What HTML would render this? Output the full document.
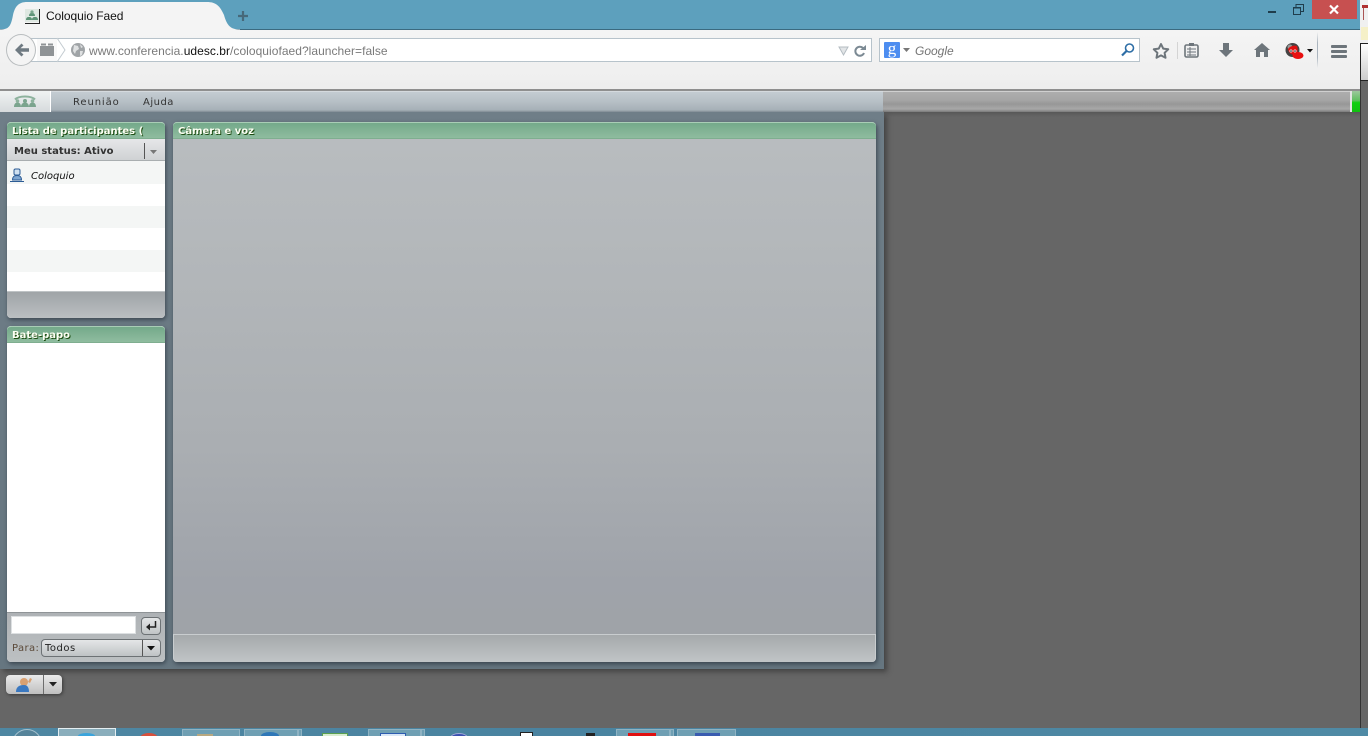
<!DOCTYPE html>
<html lang="pt">
<head>
<meta charset="utf-8">
<title>Coloquio Faed</title>
<style>
html,body{margin:0;padding:0;width:1368px;height:736px;overflow:hidden;background:#666}
#w{position:relative;width:1368px;height:736px;overflow:hidden;background:#666;font-family:"Liberation Sans",sans-serif}
.a{position:absolute}
.ph{position:absolute;height:17px;background:linear-gradient(#74a98a,#8fbc9f);border-top:1px solid #a9cdb6;border-bottom:1px solid #7fae90;border-radius:4px 4px 0 0;box-sizing:border-box;color:#fdfff4;font:bold 10px/15px "DejaVu Sans",sans-serif;padding:1px 0 0 5px;text-shadow:1px 1px 0 #1d4d12;white-space:nowrap;overflow:hidden}
.tb{position:absolute;top:729px;height:7px;box-sizing:border-box;background:#6f9fb3;border:1px solid #8fb3c3;border-bottom:0}
.tx{position:absolute;white-space:nowrap}
</style>
</head>
<body>
<div id="w">
<!-- right neighbouring window strip -->
<div class="a" style="left:1360px;top:0;width:8px;height:43px;background:#f0f0f0"></div>
<div class="a" style="left:1362px;top:5px;width:6px;height:3px;background:#b03030"></div>
<div class="a" style="left:1363px;top:8px;width:5px;height:12px;border-left:1px solid #a55;box-sizing:border-box"></div>
<div class="a" style="left:1361px;top:27px;width:7px;height:13px;background:#f5f0c8"></div>
<div class="a" style="left:1360px;top:43px;width:8px;height:38px;box-sizing:border-box;background:linear-gradient(#fff,#ccc);border:1px solid #222;border-right:0"></div>
<div class="a" style="left:1360px;top:81px;width:1px;height:648px;background:#333"></div>

<!-- title bar -->
<div class="a" style="left:0;top:0;width:1360px;height:30px;background:#5da0bd;border-bottom:1px solid #3b6a80;box-sizing:border-box"></div>
<!-- nav bar -->
<div class="a" style="left:0;top:30px;width:1360px;height:61px;background:linear-gradient(#f4f4f4,#eeeeee);border-bottom:2px solid #8f8f8f;box-sizing:border-box"></div>
<!-- tab -->
<svg class="a" style="left:0;top:0" width="240" height="31" viewBox="0 0 240 31">
<path d="M0 29.500C9 29.500 11 26 13 15C15 6 19 2 27 2H207C216 2 220 6 224 15C227 26 231 29.500 240 29.500V31H0Z" fill="#f4f4f4" stroke="none"/>
</svg>
<svg class="a" style="left:236px;top:9px" width="14" height="14" viewBox="0 0 14 14"><path d="M2 7h10M7 2v10" stroke="#47697a" stroke-width="2.200" fill="none"/></svg>
<svg class="a" style="left:24px;top:8px" width="16" height="16" viewBox="0 0 16 16"><rect x="1" y="1" width="14" height="13" fill="#dfe8e2"/><path d="M15.500 1v14.500H1" stroke="#222" fill="none"/><path d="M2 12c0-3 2-3 3-3s3 0 3 3zM8 12c0-3 2-3 3-3s3 0 3 3zM5 8c0-3 2-3 3-3s3 0 3 3z" fill="#5f9478"/><circle cx="8" cy="4" r="1.600" fill="#7aa68d"/></svg>
<div class="tx" style="left:46px;top:9px;font-size:12px;line-height:15px;color:#111;letter-spacing:-.05px">Coloquio Faed</div>

<!-- window controls -->
<div class="a" style="left:1268px;top:11px;width:8px;height:2px;background:#1f3d4c"></div>
<svg class="a" style="left:1290px;top:3px" width="16" height="13"><path d="M3.500 4.500h7v7h-7zM6 4V1.500h7.500v7H11" stroke="#1f3d4c" fill="none"/><path d="M3.500 5h7" stroke="#1f3d4c"/></svg>
<div class="a" style="left:1312px;top:0;width:45px;height:19px;background:#c75050"></div>
<svg class="a" style="left:1327px;top:3px" width="14" height="13"><path d="M3 2.500l8 8M11 2.500l-8 8" stroke="#fff" stroke-width="2.200"/></svg>

<!-- url bar -->
<div class="a" style="left:22px;top:38px;width:850px;height:24px;background:#fff;border:1px solid #b7c3cb;box-sizing:border-box"></div>
<div class="a" style="left:6px;top:34px;width:28px;height:30px;border-radius:50%;background:#f4f4f4;border:1px solid #b9bdbf"></div>
<svg class="a" style="left:12px;top:41px" width="20" height="18" viewBox="0 0 20 18"><path d="M3 9l6.500-6.500 2 2L8.500 7.200H17v3.600H8.500l3 2.700-2 2z" fill="#6f7a82"/></svg>
<div class="a" style="left:37px;top:39px;width:22px;height:22px;background:#f8f8f8"></div>
<svg class="a" style="left:40px;top:43px" width="26" height="22" viewBox="0 0 26 22"><rect x="0" y="3" width="14" height="10" fill="#8f9396"/><rect x="1" y="0.500" width="5" height="2" fill="#8f9396"/><rect x="8" y="0.500" width="5" height="2" fill="#8f9396"/></svg>
<svg class="a" style="left:55px;top:37px" width="12" height="26"><path d="M2 1l8 12-8 12" stroke="#c4ccd1" fill="#fff"/></svg>
<svg class="a" style="left:71px;top:43px" width="14" height="14" viewBox="0 0 14 14"><circle cx="7" cy="7" r="7" fill="#a0a4a7"/><path d="M3 2l4 1 1 3-3 2-1 3-2-3zM9 1l3 3-2 1zM9 8l3 0-1 4-2 1z" fill="#dfe1e2"/></svg>
<div class="tx" style="left:89px;top:44px;font-size:12px;line-height:15px;color:#7a7a7a;letter-spacing:.04px">www.conferencia.<span style="color:#111">udesc.br</span>/coloquiofaed?launcher=false</div>
<svg class="a" style="left:838px;top:46px" width="11" height="11"><path d="M1 1h9l-4.500 8z" fill="#e2e5e7" stroke="#b4bcc2"/></svg>
<svg class="a" style="left:853px;top:44px" width="14" height="14" viewBox="0 0 14 14"><path d="M11 9a4.500 4.500 0 1 1-1-5" stroke="#7c8a94" stroke-width="2" fill="none"/><path d="M7 6h6V1z" fill="#7c8a94"/></svg>

<!-- search box -->
<div class="a" style="left:879px;top:38px;width:261px;height:24px;background:#fff;border:1px solid #b7c3cb;box-sizing:border-box"></div>
<div class="a" style="left:884px;top:42px;width:16px;height:16px;background:#4d8df0;border-radius:1px;color:#fff;font:17px/13px 'Liberation Serif',serif;text-align:center;overflow:hidden">g</div>
<svg class="a" style="left:903px;top:48px" width="8" height="5"><path d="M0 0h7L3.500 4z" fill="#777"/></svg>
<div class="tx" style="left:915px;top:44px;font-size:12px;line-height:15px;font-style:italic;color:#757575">Google</div>
<svg class="a" style="left:1120px;top:42px" width="16" height="16" viewBox="0 0 16 16"><circle cx="9.500" cy="6" r="4" stroke="#2e6ea6" stroke-width="1.600" fill="#fff"/><path d="M6.500 9l-4.500 4.500" stroke="#2e6ea6" stroke-width="2.200"/></svg>

<!-- toolbar icons -->
<svg class="a" style="left:1152px;top:42px" width="18" height="17" viewBox="0 0 18 17"><path d="M9 2l2.200 4.600 5 .7-3.600 3.500.9 5L9 13.400 4.500 15.800l.9-5L1.800 7.300l5-.7z" fill="#f4f4f4" stroke="#6d757b" stroke-width="2" stroke-linejoin="round"/></svg>
<div class="a" style="left:1177px;top:42px;width:1px;height:17px;background:#d4d4d4"></div>
<svg class="a" style="left:1184px;top:42px" width="15" height="16" viewBox="0 0 15 16"><rect x="1" y="3" width="13" height="12" rx="1.500" fill="#f0f0f0" stroke="#6d757b" stroke-width="1.600"/><rect x="5" y="1" width="5" height="3" fill="#6d757b"/><path d="M3 7h9M3 10h9M3 13h9M6 5v9" stroke="#6d757b"/></svg>
<svg class="a" style="left:1218px;top:42px" width="16" height="16" viewBox="0 0 16 16"><path d="M5 1h6v7h4l-7 7-7-7h4z" fill="#6d757b"/></svg>
<svg class="a" style="left:1254px;top:43px" width="16" height="15" viewBox="0 0 16 15"><path d="M8 0l8 7h-2v7h-4V9H6v5H2V7H0z" fill="#6d757b"/></svg>
<svg class="a" style="left:1285px;top:43px" width="19" height="17" viewBox="0 0 19 17"><circle cx="7.500" cy="7" r="7" fill="#444"/><circle cx="5" cy="4" r="2.500" fill="#999"/><path d="M3 6c2-3 6-4 9-3 1 3 1 6-1 8-3 2-7 0-8-5z" fill="#e01010"/><ellipse cx="13" cy="12.500" rx="5.500" ry="3.500" fill="#e81010"/><circle cx="6" cy="8" r="1.500" fill="#fff"/><circle cx="10" cy="8" r="1.500" fill="#fff"/><circle cx="6" cy="8" r=".8" fill="#000"/><circle cx="10" cy="8" r=".8" fill="#000"/></svg>
<svg class="a" style="left:1307px;top:49px" width="7" height="4"><path d="M0 0h6L3 3.500z" fill="#111"/></svg>
<div class="a" style="left:1317px;top:32px;width:1px;height:36px;background:linear-gradient(rgba(170,180,190,0),#aab4be 30%,#aab4be 70%,rgba(170,180,190,0))"></div>
<div class="a" style="left:1331px;top:45px;width:16px;height:3px;background:#6d757b;border-radius:1px"></div>
<div class="a" style="left:1331px;top:50px;width:16px;height:3px;background:#6d757b;border-radius:1px"></div>
<div class="a" style="left:1331px;top:55px;width:16px;height:3px;background:#6d757b;border-radius:1px"></div>

<!-- app bar right part -->
<div class="a" style="left:883px;top:91px;width:467px;height:21px;background:linear-gradient(#aeaeae 0,#a6a6a6 40%,#979797 60%,#a8a8a8 85%,#7a7a7a 100%);border-top:1px solid #d0d0d0;box-sizing:border-box"></div>
<div class="a" style="left:1350px;top:91px;width:2px;height:21px;background:#e4e4e4"></div>
<div class="a" style="left:1352px;top:91px;width:8px;height:21px;background:linear-gradient(#9cc79c,#5fbf5f 45%,#0fd00f 55%,#10c010)"></div>
<div class="a" style="left:883px;top:112px;width:477px;height:5px;background:linear-gradient(#585858,#666)"></div>

<!-- app container -->
<div class="a" style="left:0;top:112px;width:884px;height:557px;background:linear-gradient(#6f7e88,#667680);box-shadow:3px 3px 5px rgba(40,40,40,.55)"></div>
<!-- app bar left part -->
<div class="a" style="left:50px;top:91px;width:833px;height:21px;background:linear-gradient(#c4ccd2,#b6bfc5 50%,#a6b0b7 90%,#7f8b94);border-top:1px solid #d5dade;box-sizing:border-box"></div>
<div class="a" style="left:0;top:91px;width:51px;height:21px;background:linear-gradient(#f0f3f3,#d6dadc);border-right:1px solid #fff;box-sizing:border-box"></div>
<svg class="a" style="left:12px;top:93px" width="26" height="16" viewBox="0 0 26 16"><path d="M2 14c0-3 1.500-4.500 3.500-4.500S9 11 9 14zM17 14c0-3 1.500-4.500 3.500-4.500S24 11 24 14zM9 14c0-3 2-4.500 4-4.500s4 1.500 4 4.500z" fill="#7ba48e"/><circle cx="5.500" cy="8" r="1.800" fill="#8db29d"/><circle cx="20.500" cy="8" r="1.800" fill="#8db29d"/><circle cx="13" cy="8" r="2" fill="#7ba48e"/><path d="M3 6.500C7 2.500 19 2.500 23 6.500" stroke="#8db29d" stroke-width="2" fill="none"/></svg>
<div class="tx" style="left:73px;top:96px;font:10px/13px 'DejaVu Sans',sans-serif;letter-spacing:.9px;color:#333">Reunião</div>
<div class="tx" style="left:143px;top:96px;font:10px/13px 'DejaVu Sans',sans-serif;letter-spacing:.5px;color:#333">Ajuda</div>

<!-- participants panel -->
<div class="a" style="left:7px;top:122px;width:158px;height:196px;border-radius:4px;box-shadow:1px 2px 4px rgba(40,50,60,.7);background:#fff"></div>
<div class="ph" style="left:7px;top:122px;width:158px">Lista de participantes (</div>
<div class="a" style="left:7px;top:139px;width:158px;height:22px;background:linear-gradient(#e6e7e9,#cfd2d4);border-bottom:1px solid #a9aeb0;box-sizing:border-box"></div>
<div class="tx" style="left:14px;top:145px;font:bold 10px/13px 'DejaVu Sans',sans-serif;color:#333">Meu status: Ativo</div>
<div class="a" style="left:144px;top:143px;width:1px;height:16px;background:#555"></div>
<svg class="a" style="left:150px;top:150px" width="8" height="5"><path d="M0 0h7L3.500 4z" fill="#777"/></svg>
<div class="a" style="left:7px;top:161px;width:158px;height:23px;background:#f4f6f5"></div>
<div class="a" style="left:7px;top:206px;width:158px;height:22px;background:#f4f6f5"></div>
<div class="a" style="left:7px;top:250px;width:158px;height:22px;background:#f4f6f5"></div>
<svg class="a" style="left:10px;top:168px" width="14" height="14" viewBox="0 0 14 14"><rect x="4" y="1" width="6" height="6" rx="1.500" fill="#cfe0f0" stroke="#2c5c95"/><path d="M2.500 12c0-3 1-4.500 4.500-4.500s4.500 1.500 4.500 4.500z" fill="#7fa6d0" stroke="#2c5c95"/><path d="M0 13.500h14" stroke="#2c5c95"/></svg>
<div class="tx" style="left:31px;top:170px;font:italic 10px/13px 'DejaVu Sans',sans-serif;color:#111">Coloquio</div>
<div class="a" style="left:7px;top:291px;width:158px;height:27px;background:linear-gradient(#9fa4a7,#bbbfc1);border-top:1px solid #bfc4c6;border-radius:0 0 4px 4px;box-sizing:border-box"></div>

<!-- chat panel -->
<div class="a" style="left:7px;top:326px;width:158px;height:336px;border-radius:4px;box-shadow:1px 2px 4px rgba(40,50,60,.7);background:#fff"></div>
<div class="ph" style="left:7px;top:326px;width:158px">Bate-papo</div>
<div class="a" style="left:7px;top:612px;width:158px;height:50px;background:linear-gradient(#aeb2b5,#bcc0c2);border-top:1px solid #8f9497;border-radius:0 0 4px 4px;box-sizing:border-box"></div>
<div class="a" style="left:11px;top:616px;width:125px;height:18px;background:#fff;border:1px solid #dde0e2;box-sizing:border-box"></div>
<div class="a" style="left:141px;top:617px;width:20px;height:18px;background:linear-gradient(#e4e6e7,#c0c4c6);border:1px solid #6d7275;border-radius:4px;box-sizing:border-box"></div>
<svg class="a" style="left:144px;top:620px" width="14" height="12" viewBox="0 0 14 12"><path d="M11.500 1v6H4" stroke="#222" stroke-width="1.500" fill="none"/><path d="M6 3.500L2 7l4 3.500z" fill="#222"/></svg>
<div class="tx" style="left:12px;top:642px;font:10px/13px 'DejaVu Sans',sans-serif;letter-spacing:.4px;color:#5b4a3a">Para:</div>
<div class="a" style="left:41px;top:639px;width:120px;height:18px;background:linear-gradient(#e4e6e7,#bfc3c5);border:1px solid #6d7275;border-radius:4px;box-sizing:border-box"></div>
<div class="tx" style="left:45px;top:642px;font:10px/13px 'DejaVu Sans',sans-serif;letter-spacing:.5px;color:#222">Todos</div>
<div class="a" style="left:142px;top:640px;width:1px;height:16px;background:#555"></div>
<svg class="a" style="left:147px;top:646px" width="9" height="5"><path d="M0 0h8L4 4.500z" fill="#111"/></svg>

<!-- camera panel -->
<div class="a" style="left:173px;top:122px;width:703px;height:540px;border-radius:4px;box-shadow:1px 2px 5px rgba(40,50,60,.75);background:linear-gradient(#b9bdc0 0,#b3b7ba 25%,#aaaeb2 60%,#9fa3aa 85%,#9fa3a6 100%)"></div>
<div class="ph" style="left:173px;top:122px;width:703px">Câmera e voz</div>
<div class="a" style="left:173px;top:634px;width:703px;height:28px;background:linear-gradient(#a5a9ab,#c0c4c6);border:1px solid #c9cdcf;border-width:1px 1px 0 1px;border-radius:0 0 4px 4px;box-sizing:border-box"></div>

<!-- bottom button -->
<div class="a" style="left:6px;top:675px;width:56px;height:19px;background:linear-gradient(#eaeaea,#bfbfbf);border-radius:4px;box-shadow:1px 1px 3px rgba(30,30,30,.6)"></div>
<div class="a" style="left:43px;top:675px;width:1px;height:19px;background:#6e6e6e"></div>
<svg class="a" style="left:15px;top:677px" width="18" height="15" viewBox="0 0 18 15"><circle cx="9" cy="5" r="4" fill="#d9a070"/><path d="M1 15c0-5 3-7 8-7 3 0 5 2 5 7z" fill="#3a78c0"/><path d="M13 5l2-4 2 1-2 4z" fill="#d9a070"/></svg>
<svg class="a" style="left:49px;top:682px" width="9" height="5"><path d="M0 0h8L4 4.500z" fill="#222"/></svg>

<!-- taskbar -->
<div class="a" style="left:0;top:728px;width:1368px;height:8px;background:linear-gradient(90deg,#4e87a2,#4a83a0 40%,#4f8aa5)"></div>
<div class="a" style="left:12px;top:729px;width:30px;height:30px;border-radius:50%;border:1px solid #a6c2cf;background:#56849a;box-sizing:border-box"></div>
<div class="tb" style="left:58px;width:58px;top:728px;height:8px;background:#8aaebc;border:1px solid #e4eef2;border-bottom:0"></div>
<div class="tb" style="left:182px;width:58px"></div>
<div class="tb" style="left:244px;width:54px"></div>
<div class="tb" style="left:298px;width:4px"></div>
<div class="tb" style="left:368px;width:53px"></div>
<div class="tb" style="left:421px;width:4px"></div>
<div class="tb" style="left:616px;width:54px"></div>
<div class="tb" style="left:670px;width:4px"></div>
<div class="tb" style="left:677px;width:59px"></div>
<div class="a" style="left:78px;top:733px;width:17px;height:6px;border-radius:50%;background:#3aa4dc"></div>
<div class="a" style="left:140px;top:733px;width:18px;height:10px;border-radius:50%;background:#d8503c"></div>
<div class="a" style="left:197px;top:734px;width:16px;height:3px;background:#b8a880"></div>
<div class="a" style="left:261px;top:732px;width:18px;height:8px;border-radius:50%;background:#2f78b8"></div>
<div class="a" style="left:322px;top:733px;width:26px;height:4px;background:#d8ecd0;border:1px solid #5aa050;box-sizing:border-box"></div>
<div class="a" style="left:380px;top:733px;width:26px;height:4px;background:#d8e6f5;border:1px solid #2c5cb0;box-sizing:border-box"></div>
<div class="a" style="left:450px;top:733px;width:18px;height:10px;border-radius:50%;background:#3a50b0;border:1px solid #a0a8d8;box-sizing:border-box"></div>
<div class="a" style="left:520px;top:732px;width:13px;height:5px;background:#fff;border:1px solid #222;box-sizing:border-box"></div>
<div class="a" style="left:586px;top:733px;width:9px;height:4px;background:#222"></div>
<div class="a" style="left:628px;top:733px;width:28px;height:4px;background:#e01010"></div>
<div class="a" style="left:695px;top:733px;width:25px;height:4px;background:#3a5cb0"></div>
</div>
</body>
</html>
